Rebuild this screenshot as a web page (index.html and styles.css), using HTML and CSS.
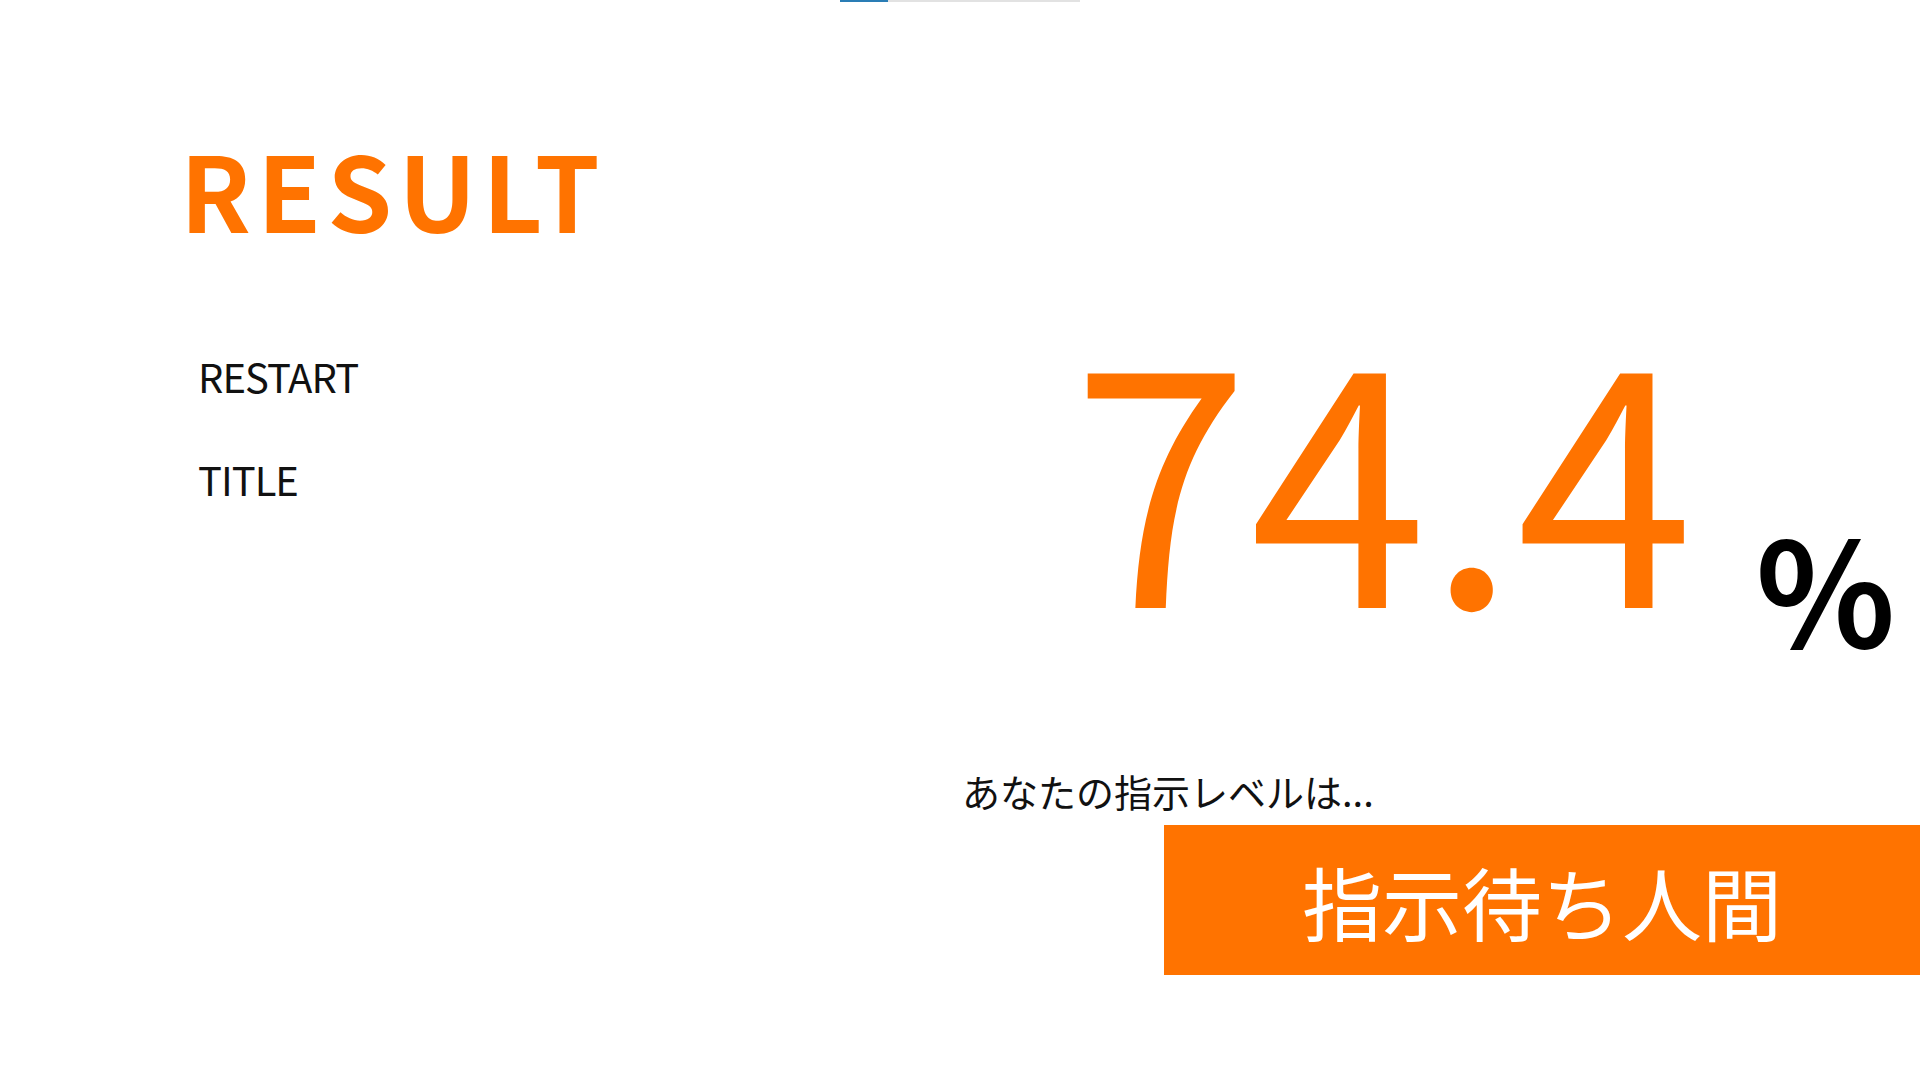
FILE: index.html
```html
<!DOCTYPE html>
<html lang="ja">
<head>
<meta charset="utf-8">
<title>RESULT</title>
<link rel="stylesheet" href="styles.css">
</head>
<body>
<div class="topbar"><div class="progress"><div class="progress-fill"></div></div></div>
<div class="page">
  <div class="left">
    <h1 class="heading">RESULT</h1>
    <nav class="menu">
      <div class="menu-item">RESTART</div>
      <div class="menu-item">TITLE</div>
    </nav>
  </div>
  <div class="right">
    <div class="score"><span class="score-num">74.4</span><span class="score-unit">%</span></div>
    <div class="label">あなたの指示レベルは...</div>
    <div class="verdict">指示待ち人間</div>
  </div>
</div>
</body>
</html>
```

FILE: styles.css
```css
html, body {
  margin: 0;
  padding: 0;
  background: #ffffff;
}
body {
  width: 1920px;
  height: 1080px;
  overflow: hidden;
  font-family: "Noto Sans CJK JP", "Noto Sans", sans-serif;
  color: #111111;
}
.topbar {
  display: flex;
  justify-content: center;
  height: 0;
}
.progress {
  width: 240px;
  height: 2px;
  background: #e2e2e2;
}
.progress-fill {
  width: 48px;
  height: 2px;
  background: #2a7db5;
}
.page {
  display: flex;
}
.left {
  width: 782px;
  padding-left: 180px;
  padding-top: 136px;
}
.heading {
  margin: 0;
  font-size: 104px;
  line-height: 1;
  font-weight: 700;
  letter-spacing: 0.06em;
  color: #ff7300;
}
.menu {
  margin-top: 116px;
  padding-left: 18px;
  display: flex;
  flex-direction: column;
  gap: 63px;
}
.menu-item {
  font-size: 40px;
  line-height: 1;
  letter-spacing: -1px;
  color: #111111;
}
.right {
  flex: 1;
  padding-top: 309px;
  display: flex;
  flex-direction: column;
}
.score {
  padding-left: 110px;
  line-height: 1;
  white-space: nowrap;
}
.score-num {
  font-size: 320px;
  font-weight: 400;
  color: #ff7300;
}
.score-unit {
  display: inline-block;
  margin-left: 62px;
  font-size: 145px;
  font-weight: 700;
  color: #000000;
  vertical-align: -40px;
}
.label {
  margin-top: 114px;
  font-size: 38px;
  line-height: 1;
  color: #111111;
}
.verdict {
  margin-top: 15px;
  margin-left: 202px;
  height: 150px;
  background: #ff7300;
  color: #ffffff;
  font-size: 80px;
  display: flex;
  align-items: center;
  justify-content: center;
}
```
